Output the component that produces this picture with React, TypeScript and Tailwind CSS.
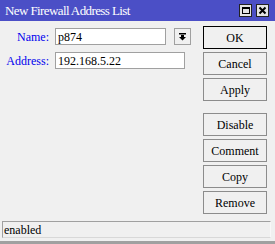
import React from "react";

const font = { fontFamily: '"Liberation Serif", "DejaVu Serif", serif' };

const ToolButton = ({ label, primary }: { label: string; primary?: boolean }) => (
  <button
    className={
      primary
        ? "w-[64px] h-[23px] bg-[#f0f0f0] border border-black text-[12px] text-black leading-none"
        : "w-[64px] h-[23px] bg-[#f0f0f0] border border-[#8c8c8c] text-[12px] text-black leading-none"
    }
  >
    {label}
  </button>
);

export default function App() {
  return (
    <div className="w-[275px] h-[244px] bg-[#f0f0f0] flex flex-col overflow-hidden" style={font}>
      {/* title bar */}
      <div className="h-[21px] bg-[#4b4fc6] flex items-center pl-[5px] pr-[6px]">
        <span className="text-white text-[13px] tracking-[-0.6px] leading-none">New Firewall Address List</span>
        <div className="ml-auto flex gap-[4px]">
          <div className="w-[13px] h-[13px] bg-[#e4e4e4] border border-[#222] flex items-center justify-center">
            <div className="w-[8px] h-[7px] border border-black border-t-2" />
          </div>
          <div className="w-[13px] h-[13px] bg-[#e4e4e4] border border-[#222] flex items-center justify-center">
            <svg width="9" height="9" viewBox="0 0 9 9">
              <path d="M1.5 1.5 L7.5 7.5 M7.5 1.5 L1.5 7.5" stroke="black" strokeWidth="2" />
            </svg>
          </div>
        </div>
      </div>

      <div className="flex flex-1">
        {/* form */}
        <div className="flex flex-col gap-[7px] pt-[7px]">
          <div className="flex items-center gap-[6px]">
            <span className="w-[49px] text-right text-[12px] text-[#0000ee] leading-none">Name:</span>
            <div className="w-[111px] h-[17px] bg-white border border-[#a0a0a0] flex items-center px-[2px] text-[12px] leading-none">
              p874
            </div>
            <div className="w-[17px] h-[17px] ml-[2px] bg-[#f0f0f0] border border-[#a0a0a0] flex items-center justify-center">
              <svg width="7" height="8" viewBox="0 0 7 8">
                <rect x="0" y="0" width="7" height="1.5" fill="black" />
                <rect x="2" y="2" width="3" height="2" fill="black" />
                <path d="M0 4 L7 4 L3.5 7.5 Z" fill="black" />
              </svg>
            </div>
          </div>
          <div className="flex items-center gap-[6px]">
            <span className="w-[49px] text-right text-[12px] text-[#0000ee] leading-none">Address:</span>
            <div className="w-[130px] h-[17px] bg-white border border-[#a0a0a0] flex items-center px-[2px] text-[12px] leading-none">
              192.168.5.22
            </div>
          </div>
        </div>

        {/* buttons */}
        <div className="ml-auto mr-[8px] pt-[5px] flex flex-col gap-[3px]">
          <ToolButton label="OK" primary />
          <ToolButton label="Cancel" />
          <ToolButton label="Apply" />
          <div className="h-[6px]" />
          <ToolButton label="Disable" />
          <ToolButton label="Comment" />
          <ToolButton label="Copy" />
          <ToolButton label="Remove" />
        </div>
      </div>

      {/* status bar */}
      <div className="mx-[2px] mr-[4px] h-[17px] border border-[#a0a0a0] border-r-[#f8f8f8] border-b-[#d8d8d8] flex items-center px-[1px] text-[12px] leading-none">
        enabled
      </div>
      <div className="h-[3px]" />
      <div className="h-[3px] bg-[#a0a0a0]" />
    </div>
  );
}
